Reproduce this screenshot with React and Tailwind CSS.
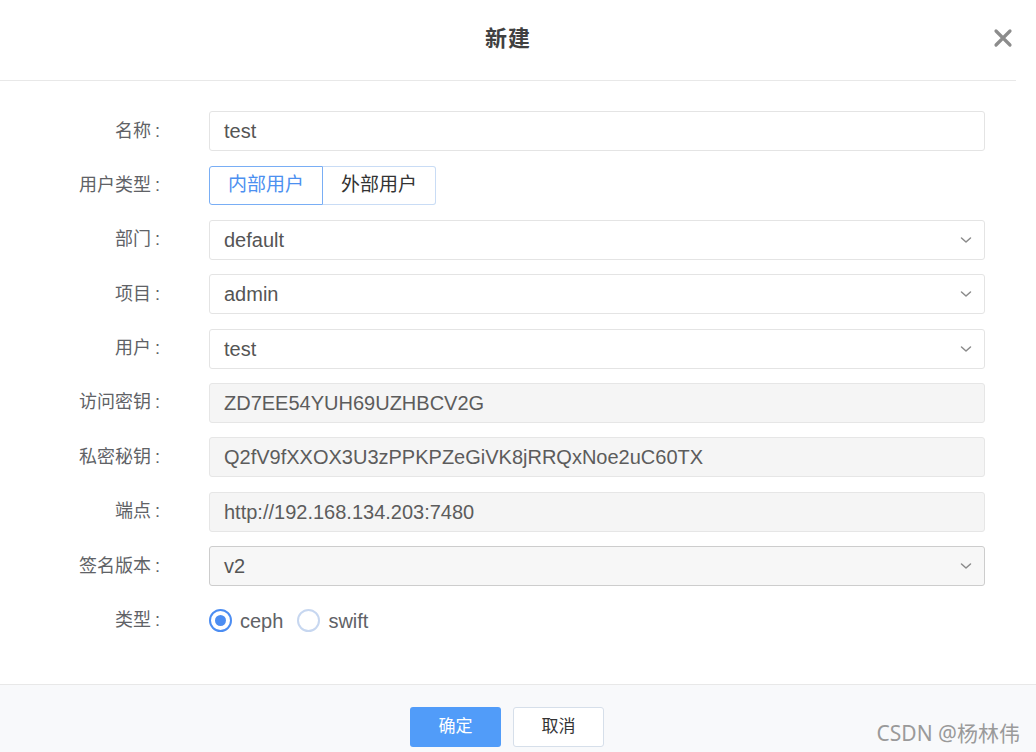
import React from "react";

function Chevron() {
  return (
    <svg width="14" height="14" viewBox="0 0 14 14" className="absolute right-[11px] top-1/2 -translate-y-1/2">
      <path d="M2.5 5 L7 9 L11.5 5" fill="none" stroke="#8a8a8a" strokeWidth="1.5" strokeLinecap="round" strokeLinejoin="round" />
    </svg>
  );
}

function Row({ label, children }) {
  return (
    <div className="flex items-center h-10">
      <div className="w-[160px] shrink-0 text-right text-[18px] text-[#606266]">
        {label}<span className="ml-[4px]">:</span>
      </div>
      <div className="ml-[49px] flex-1 h-full flex items-center">{children}</div>
    </div>
  );
}

const fieldStyles = {
  normal: "bg-white border-[#e4e4e4] text-[#555]",
  disabled: "bg-[#f5f5f5] border-[#e6e6e6] text-[#5c5c5c]",
  dark: "bg-[#f7f7f7] border-[#cdcdcd] text-[#555]",
};

function Field({ value, kind = "normal", select }) {
  return (
    <div className={"relative w-full h-full rounded-[3px] border flex items-center pl-[14px] text-[20px] " + fieldStyles[kind]}>
      {value}
      {select && <Chevron />}
    </div>
  );
}

export default function App() {
  return (
    <div className="w-[1036px] h-[752px] bg-white overflow-hidden relative" style={{ fontFamily: '"Liberation Sans", "Noto Sans CJK SC", sans-serif' }}>
      <div className="w-[1016px]">
        {/* 标题栏 */}
        <div className="relative h-[81px] border-b border-[#e8e8e8] flex items-center justify-center">
          <span className="text-[22px] font-bold text-[#404040] tracking-[1px] -mt-[4px]">新建</span>
          <span className="absolute right-[2px] top-[27px]">
            <svg width="22" height="22" viewBox="0 0 22 22">
              <path d="M4 4 L18 18 M18 4 L4 18" stroke="#8c8c8c" strokeWidth="3.2" strokeLinecap="round" />
            </svg>
          </span>
        </div>

        {/* 表单 */}
        <div className="pt-[30px] pr-[31px] flex flex-col gap-[14.4px]">
          <Row label="名称"><Field value="test" /></Row>
          <Row label="用户类型">
            <div className="flex h-[39px]">
              <div className="w-[114px] h-full flex items-center justify-center border border-[#79aef5] rounded-l-[3px] text-[19px] text-[#4c90f0] bg-white">内部用户</div>
              <div className="w-[113px] h-full flex items-center justify-center border border-l-0 border-[#c9dcf5] rounded-r-[3px] text-[19px] text-[#333]">外部用户</div>
            </div>
          </Row>
          <Row label="部门"><Field value="default" select /></Row>
          <Row label="项目"><Field value="admin" select /></Row>
          <Row label="用户"><Field value="test" select /></Row>
          <Row label="访问密钥"><Field value="ZD7EE54YUH69UZHBCV2G" kind="disabled" /></Row>
          <Row label="私密秘钥"><Field value="Q2fV9fXXOX3U3zPPKPZeGiVK8jRRQxNoe2uC60TX" kind="disabled" /></Row>
          <Row label="端点"><Field value="http://192.168.134.203:7480" kind="disabled" /></Row>
          <Row label="签名版本"><Field value="v2" kind="dark" select /></Row>
          <Row label="类型">
            <div className="flex items-center text-[20px] text-[#606266]">
              <span className="w-[23px] h-[23px] rounded-full border-[2px] border-[#4c8df2] flex items-center justify-center">
                <span className="w-[11px] h-[11px] rounded-full bg-[#4c8df2]"></span>
              </span>
              <span className="ml-[8px]">ceph</span>
              <span className="ml-[14px] w-[23px] h-[23px] rounded-full border-[2px] border-[#c7d7f0]"></span>
              <span className="ml-[8px]">swift</span>
            </div>
          </Row>
        </div>
      </div>

      {/* 底部按钮 */}
      <div className="absolute left-0 right-0 top-[684px] bottom-0 border-t border-[#e8e8e8] bg-[#f8f9fb]">
        <div className="flex gap-[12px] pl-[410px] pt-[22px]">
          <button className="w-[91px] h-[40px] rounded-[3px] bg-[#519cf9] text-white text-[17px]">确定</button>
          <button className="w-[91px] h-[40px] rounded-[3px] bg-white border border-[#d6dfea] text-[#333] text-[17px]">取消</button>
        </div>
        <div className="absolute right-[16px] top-[33px] text-[21px] text-[#9a9a9a]" style={{ fontFamily: '"Noto Sans", "Noto Sans CJK SC", sans-serif' }}>CSDN @杨林伟</div>
      </div>
    </div>
  );
}
